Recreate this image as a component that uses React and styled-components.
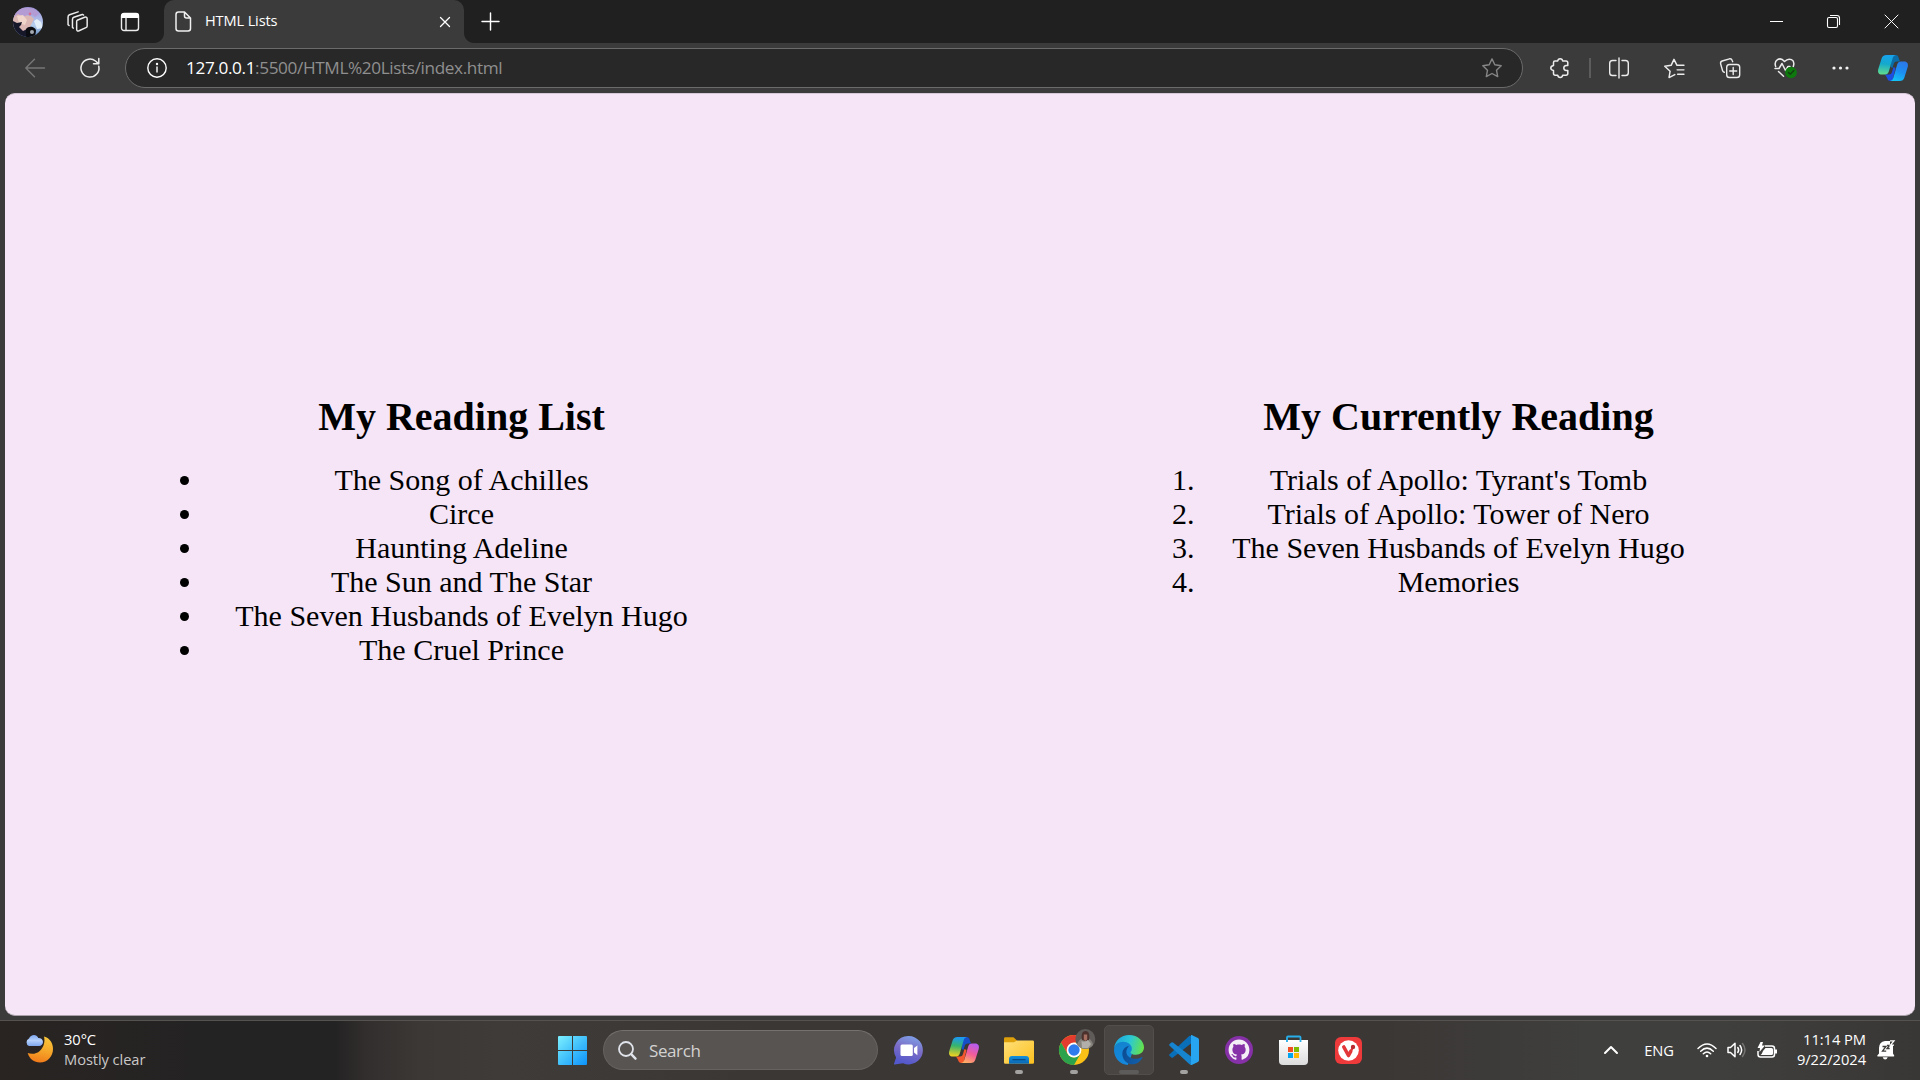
import React from "react";
import styled, { createGlobalStyle } from "styled-components";

const GlobalStyle = createGlobalStyle`
  * { box-sizing: border-box; }
  body { margin: 0; background: #3b3b3b; overflow: hidden; }
  svg { display: block; flex: none; overflow: visible; }
`;

const uiFont = `"Segoe UI", "Open Sans", "Noto Sans", sans-serif`;

const Screen = styled.div`
  width: 1920px;
  height: 1080px;
  display: flex;
  flex-direction: column;
  background: #3b3b3b;
  color: #fff;
  font-family: ${uiFont};
`;

const TitleBar = styled.header`
  height: 43px;
  flex: none;
  display: flex;
  background: #202020;
`;

const Cell = styled.div`
  width: ${(p) => p.$w}px;
  height: 100%;
  flex: none;
  display: flex;
  align-items: center;
  justify-content: ${(p) => p.$justify || "center"};
`;

const Tab = styled.div`
  position: relative;
  width: 300px;
  height: 43px;
  margin-left: 3px;
  padding: 0 14px 0 11px;
  display: flex;
  align-items: center;
  background: #3b3b3b;
  border-radius: 10px 10px 0 0;
  &::before,
  &::after {
    content: "";
    position: absolute;
    bottom: 0;
    width: 10px;
    height: 10px;
  }
  &::before {
    left: -10px;
    background: radial-gradient(circle at 0 0, #202020 9.5px, #3b3b3b 10.5px);
  }
  &::after {
    right: -10px;
    background: radial-gradient(circle at 100% 0, #202020 9.5px, #3b3b3b 10.5px);
  }
`;

const TabTitle = styled.span`
  flex: 1;
  margin: -3px 0 0 13px;
  font-size: 14.6px;
  line-height: 20px;
  letter-spacing: -0.14px;
`;

const Spacer = styled.div`
  flex: 1;
`;

const Toolbar = styled.nav`
  height: 50px;
  flex: none;
  display: flex;
  align-items: center;
`;

const AddressBar = styled.div`
  width: 1398px;
  height: 40px;
  margin: 0 9px 0 15px;
  padding: 0 20px 0 21px;
  display: flex;
  align-items: center;
  border: 1px solid #6b6b6b;
  border-radius: 20px;
  background: #282828;
`;

const Url = styled.span`
  flex: 1;
  margin: -1px 0 0 19px;
  font-size: 17.2px;
  line-height: 24px;
  letter-spacing: -0.38px;
  color: #8f8f8f;
  b {
    font-weight: 400;
    color: #fff;
  }
`;

const Divider = styled.div`
  width: 2px;
  height: 20px;
  margin-left: 1px;
  background: #5c5c5c;
`;

const Page = styled.main`
  height: 923px;
  flex: none;
  margin: 0 5px;
  padding: 300px 0 0 200px;
  display: flex;
  align-items: flex-start;
  gap: 484px;
  border-radius: 10px;
  border-top: 1px solid #d6c8d6;
  border-bottom: 1px solid #a9a0a9;
  background: #f5e5f7;
  color: #000;
  font-family: "Times New Roman", "Liberation Serif", serif;
`;

const Column = styled.section`
  width: 513px;
  text-align: center;
`;

const Heading = styled.h2`
  margin: 0 0 23px;
  font-size: 40px;
  line-height: 46px;
`;

const Books = styled.ul`
  margin: 0;
  padding: 0;
  font-size: 30px;
  line-height: 34px;
  list-style: ${(p) => (p.as === "ol" ? "decimal" : "disc")};
`;

const Taskbar = styled.footer`
  height: 60px;
  margin-top: 4px;
  padding-bottom: 1px;
  flex: none;
  display: flex;
  align-items: center;
  border-top: 1px solid #555250;
  background: linear-gradient(90deg, #292422 0, #242323 200px, #242323 335px, #312e2d 365px, #3c3836 420px, #3f3b38 500px, #3b3735 760px, #3b3735 1380px, #3f3f3e 1590px, #3f3f3e 1720px, #393736 1920px);
`;

const Weather = styled.div`
  width: 541px;
  padding-left: 25px;
  display: flex;
  align-items: center;
  gap: 11px;
`;

const Lines = styled.div`
  margin-top: -3px;
  font-size: 14.7px;
  line-height: 20px;
  letter-spacing: ${(p) => p.$spacing || 0}px;
  text-align: ${(p) => p.$align || "left"};
  white-space: nowrap;
`;

const Muted = styled.div`
  color: #c9c8c7;
`;

const Search = styled.div`
  width: 275px;
  height: 40px;
  padding-left: 14px;
  display: flex;
  align-items: center;
  gap: 12px;
  border: 1px solid #656260;
  border-top-color: #74716f;
  border-radius: 20px;
  background: #575452;
  color: #d3d2d1;
  font-size: 17px;
  letter-spacing: -0.4px;
`;

const Apps = styled.div`
  height: 100%;
  margin-left: 3px;
  display: flex;
`;

const AppSlot = styled.div`
  position: relative;
  width: 55px;
  height: 58px;
  display: flex;
  align-items: center;
  justify-content: center;
`;

const AppTile = styled.div`
  width: 50px;
  height: 50px;
  display: flex;
  align-items: center;
  justify-content: center;
  border-radius: 5px;
  border: 1px solid ${(p) => (p.$active ? "#514e4c" : "transparent")};
  background: ${(p) => (p.$active ? "#484543" : "transparent")};
`;

const Indicator = styled.i`
  position: absolute;
  bottom: 5px;
  left: 50%;
  width: ${(p) => (p.$active ? 20 : 8)}px;
  height: 4px;
  border-radius: 2px;
  transform: translateX(-50%);
  background: ${(p) => (p.$active ? "#5e5c5b" : "#a3a2a1")};
`;

const Language = styled.span`
  font-size: 14.7px;
  margin-top: -1px;
  letter-spacing: -0.2px;
`;

const Stroke = ({ s = 20, c = "#ececec", w = 1.4, children }) => (
  <svg width={s} height={s} viewBox="0 0 20 20" fill="none" stroke={c} strokeWidth={w} strokeLinecap="round" strokeLinejoin="round">
    {children}
  </svg>
);

const Avatar = () => (
  <svg width="30" height="30" viewBox="0 0 30 30">
    <defs>
      <clipPath id="avatarClip"><circle cx="15" cy="15" r="15" /></clipPath>
      <linearGradient id="sky" x1="0" y1="0" x2="0" y2="1">
        <stop offset="0" stopColor="#9c8fd6" />
        <stop offset=".6" stopColor="#b6cff0" />
        <stop offset="1" stopColor="#5f86bd" />
      </linearGradient>
    </defs>
    <g clipPath="url(#avatarClip)">
      <path fill="url(#sky)" d="M0 0h30v30H0z" />
      <path fill="#dcb8b4" d="M0 6 7 5l4 3 7 1 3 3-4 8-5 5-8-2-4-6z" />
      <path fill="#b39bd4" d="M2 5C8-1 22-1 26 7l-4 3-4-4-8 4-5-3-4 3z" />
      <path fill="#efd5ca" d="m4 9 6-1 4 5-2 5-6-2z" />
      <path fill="#17172a" d="m0 14 4 2 5-1-1 3-2 2 4 4 4-2 3 2 1 9H7L0 21z" />
      <path fill="#e3eefb" d="m21 14 3-2 4 3 2 6-6 1z" />
      <path fill="#0b0d12" d="M13 22c3-4 10-2 10 2l-1 6h-9z" />
      <circle cx="19" cy="25" r="2" fill="#a5a9b1" />
      <circle cx="17" cy="7" r="1.4" fill="#d66d93" />
    </g>
  </svg>
);

const Copilot = ({ id, colors }) => (
  <svg width="30" height="28" viewBox="0 0 30 28">
    <defs>
      <linearGradient id={id + "a"} x1=".4" y1="0" x2=".3" y2="1">
        <stop offset="0" stopColor={colors[0]} />
        <stop offset=".45" stopColor={colors[1]} />
        <stop offset="1" stopColor={colors[2]} />
      </linearGradient>
      <linearGradient id={id + "b"} x1=".7" y1="0" x2=".3" y2="1">
        <stop offset="0" stopColor={colors[3]} />
        <stop offset=".5" stopColor={colors[4]} />
        <stop offset="1" stopColor={colors[5]} />
      </linearGradient>
    </defs>
    <path fill={colors[6]} d="M14 1h3.500c2 0 2.700 1.200 3.300 3.200L22 7.500h-3c-2 0-3 1-3.500 3L14.500 14l-2-1z" />
    <path fill={colors[7]} d="M7 20.500h4c1.500 0 2.500-.8 3-2.500l1.500-5 2 1-3 13H12.500c-2 0-2.800-1-3.500-3.200z" />
    <path fill={`url(#${id}a)`} d="M8.500 1H18c-2.200.2-2.900 1.700-3.500 3.700l-3.700 12.800C10.200 19.500 9 20.500 7 20.500H4c-3.400 0-4.600-2.400-3.700-5.600L3.600 4.600C4.300 2.300 5.800 1 8.500 1z" />
    <path fill={`url(#${id}b)`} d="M21.500 27H12c2.200-.2 2.900-1.700 3.500-3.700l3.700-12.800C19.800 8.500 21 7.500 23 7.500h3c3.400 0 4.600 2.400 3.700 5.600l-3.300 10.300C25.700 25.700 24.200 27 21.500 27z" />
  </svg>
);

const MoonCloud = () => (
  <svg width="28" height="28" viewBox="0 0 28 28">
    <defs>
      <linearGradient id="moon" x1=".6" y1="0" x2=".4" y2="1">
        <stop offset="0" stopColor="#f8c53b" /><stop offset=".5" stopColor="#f5a82a" /><stop offset="1" stopColor="#f07a1a" />
      </linearGradient>
      <linearGradient id="cloud" x1="0" y1="0" x2="0" y2="1">
        <stop offset="0" stopColor="#7fa8f0" /><stop offset=".5" stopColor="#b4d0fb" /><stop offset="1" stopColor="#7fa7ee" />
      </linearGradient>
    </defs>
    <g transform="translate(0 -1.500)">
      <path fill="url(#moon)" d="M19 2C25 3.500 28 9 28 14.500 28 22 22.500 28 15 28 9 28 4.500 24.500 2.700 18.500c3.800 1.500 9 1 12.300-2.300C19 12.500 20.200 7 19 2z" />
      <path fill="url(#cloud)" d="M4 11.500a4 4 0 0 1 0-7.400C5.500 0 11.500-1 13.300 3.500c2.500-.2 4.700 1.500 4.700 4 0 2.300-1.700 4-4 4z" />
    </g>
  </svg>
);

const StartLogo = () => (
  <svg width="29" height="29" viewBox="0 0 29 29">
    <defs>
      <linearGradient id="win" gradientUnits="userSpaceOnUse" x1="0" y1="0" x2="29" y2="29">
        <stop offset="0" stopColor="#7df0ff" /><stop offset=".5" stopColor="#42c1fb" /><stop offset="1" stopColor="#0c93fb" />
      </linearGradient>
    </defs>
    <path fill="url(#win)" d="M1 0h13v14H0V1q0-1 1-1zm14 0h13q1 0 1 1v13H15zM0 15h14v14H1q-1 0-1-1zm15 0h14v13q0 1-1 1H15z" />
  </svg>
);

const ChatLogo = () => (
  <svg width="29" height="29" viewBox="0 0 29 29">
    <defs>
      <linearGradient id="chat" x1=".8" y1="0" x2=".5" y2="1">
        <stop offset="0" stopColor="#7fa4ea" /><stop offset=".5" stopColor="#7b6cc6" /><stop offset="1" stopColor="#5358cc" />
      </linearGradient>
    </defs>
    <path fill="url(#chat)" d="M14.800 0A14.200 14.200 0 1 1 9 27.200L.6 28.500c-.6 0-.7-.6-.5-1l2-6A14.200 14.200 0 0 1 14.800 0z" />
    <rect x="6.500" y="8.500" width="12.300" height="11.500" rx="1.500" fill="#fff" />
    <path fill="#fff" d="m20 12 3.400-2.600v9.800L20 16.600z" />
  </svg>
);

const FolderLogo = () => (
  <svg width="30" height="27" viewBox="0 0 30 27">
    <defs>
      <linearGradient id="folder" x1="0" y1="0" x2="1" y2="1"><stop offset="0" stopColor="#ffe07a" /><stop offset="1" stopColor="#fcc01e" /></linearGradient>
      <linearGradient id="folderBase" x1="0" y1="0" x2="0" y2="1"><stop offset="0" stopColor="#1391dd" /><stop offset="1" stopColor="#0a66b4" /></linearGradient>
    </defs>
    <path fill="#dd9f0a" d="M0 1.500Q0 .2 1.300.2H9.500L13 3.500V9H0z" />
    <path fill="url(#folder)" d="M0 5.300h10L13 3.500h15.700q1.300 0 1.300 1.300V25.500q0 1.300-1.300 1.300H1.300Q0 26.800 0 25.500z" />
    <path fill="url(#folderBase)" d="M5 26.800V22q0-3 3-3h14q3 0 3 3v4.800z" />
    <path stroke="#09477f" strokeWidth="1.200" d="M8.500 22.700h13" />
  </svg>
);

const ChromeLogo = () => (
  <svg width="30" height="30" viewBox="0 0 30 30">
    <circle cx="15" cy="15" r="15" fill="#fbc116" />
    <path fill="#e33b2e" d="M2 7.500A15 15 0 0 1 28 7.500H15L8.500 18.700z" />
    <path fill="#2ba24c" d="M2 7.500 8.500 18.700Q11 22.500 15 22.500q3.500 0 6.500-3.700L15 30A15 15 0 0 1 2 7.500z" />
    <circle cx="15" cy="15" r="7.400" fill="#fff" />
    <circle cx="15" cy="15" r="5.700" fill="#2e7bee" />
    <circle cx="26.300" cy="4" r="10" fill="#5e5b59" />
    <path fill="#88847d" d="M18 9.500q2-5 5-6l6-1q5 4 5 7.500-3 4-7.700 4-5 0-8.300-4.500z" />
    <path fill="#4b302c" d="M23 5c-1-5 0-9 3.500-9s4.500 4 3.500 9l-3 1z" />
    <path fill="#a66e60" d="M24.800-.5h3.400v5l-1.700 1.500-1.700-1.500z" />
    <path fill="#b2afab" d="M22.500 6q3 2 6.500-1l3 4-3 4h-6z" />
  </svg>
);

const EdgeLogo = () => (
  <svg width="30" height="30" viewBox="0 0 24 24">
    <defs>
      <linearGradient id="edgeTop" x1="0" y1=".4" x2="1" y2=".6"><stop offset="0" stopColor="#1ba5df" /><stop offset=".5" stopColor="#2cc8d3" /><stop offset="1" stopColor="#67e246" /></linearGradient>
      <linearGradient id="edgeLeft" x1=".3" y1="0" x2=".5" y2="1"><stop offset="0" stopColor="#1283ce" /><stop offset="1" stopColor="#1488dd" /></linearGradient>
      <linearGradient id="edgeDeep" x1="0" y1="0" x2="1" y2=".4"><stop offset="0" stopColor="#0b4a90" /><stop offset="1" stopColor="#125ea9" /></linearGradient>
    </defs>
    <path fill="url(#edgeLeft)" d="M0 12C0 7.500 4 4.800 8 4.800c5 0 7.800 3.200 7.800 6.500L11 23.900C5 23.800 0 18.500 0 12z" />
    <path fill="url(#edgeDeep)" d="M12 8.800c-3.500.5-5.500 3.400-5.300 6.800.3 5 4.600 8.400 9 7.800 3.300-.6 5.800-2.800 6.900-5.100.3-.5-.1-.8-.6-.5-5.800 3-12.400-.1-12.100-4.500.1-2 1-3.300 2.100-4.500z" />
    <path fill="url(#edgeTop)" d="M0 11C.5 4.500 5.800 0 12 0c7.300 0 12 5.200 12 9.800 0 3.700-3 6-6.400 6-2.700 0-4.400-1-4.400-1.900 0-.7 1.100-1 1.100-2.900 0-3-3.100-5.600-7-5.600C3.500 5.400.7 7.800 0 11z" />
  </svg>
);

const CodeLogo = () => (
  <svg width="30" height="30" viewBox="0 0 30 30">
    <path fill="#0a6fb9" d="m22 8.500-18 14q-.8.600-1.600 0L.6 21q-.9-.9 0-1.800L20.500.8 22 1z" />
    <path fill="#1684cf" d="m22 21.500-18-14q-.8-.6-1.600 0L.6 9q-.9.900 0 1.800l19.900 18.400L22 29z" />
    <path fill="#27a5f0" d="M22 8.400V.2q0-.5.700-.1l6.200 2.800Q30 3.500 30 4.700v20.600q0 1.200-1.100 1.800l-6.200 2.800q-1 .4-1.900-.4c1 .4 1.200-.5 1.200-1.200z" />
  </svg>
);

const GithubLogo = () => (
  <svg width="28" height="28" viewBox="0 0 28 28">
    <circle cx="14" cy="14" r="14" fill="#8631a7" />
    <g transform="translate(3.600 3.600) scale(1.300)">
      <path fill="#f4eef6" d="M8 0C3.580 0 0 3.580 0 8c0 3.540 2.290 6.530 5.470 7.590.4.070.55-.17.55-.38 0-.19-.01-.82-.01-1.490-2.010.37-2.530-.49-2.690-.94-.09-.23-.48-.94-.82-1.130-.28-.15-.68-.52-.01-.53.630-.01 1.080.58 1.230.82.720 1.210 1.870.87 2.330.66.070-.52.280-.87.510-1.070-1.780-.2-3.640-.89-3.640-3.950 0-.87.310-1.590.820-2.150-.08-.2-.36-1.020.08-2.120 0 0 .67-.21 2.200.82.640-.18 1.320-.27 2-.27s1.360.09 2 .27c1.530-1.040 2.200-.82 2.200-.82.440 1.100.16 1.920.08 2.120.51.560.82 1.270.82 2.150 0 3.070-1.870 3.750-3.650 3.950.29.25.54.73.54 1.480 0 1.070-.01 1.930-.01 2.200 0 .21.150.46.550.38A8.010 8.010 0 0 0 16 8c0-4.420-3.580-8-8-8z" />
    </g>
  </svg>
);

const StoreLogo = () => (
  <svg width="29" height="29" viewBox="0 0 29 29">
    <defs><linearGradient id="bag" x1="0" y1="0" x2="0" y2="1"><stop offset="0" stopColor="#fff" /><stop offset="1" stopColor="#dcdcdc" /></linearGradient></defs>
    <path fill="url(#bag)" d="M0 4h29v21q0 4-4 4H4q-4 0-4-4z" />
    <path fill="none" stroke="#28aee8" strokeWidth="1.800" d="M8 6V1.500Q8 .5 9 .5h11.500q1 0 1 1V6" />
    <path fill="#f25022" d="M9 11h5v5H9z" /><path fill="#7fba00" d="M15 11h5v5h-5z" />
    <path fill="#00a4ef" d="M9 17h5v5H9z" /><path fill="#ffb900" d="M15 17h5v5h-5z" />
  </svg>
);

const VivaldiLogo = () => (
  <svg width="27" height="27" viewBox="0 0 27 27">
    <rect width="27" height="27" rx="6" fill="#ef3a3c" />
    <circle cx="13.500" cy="13.500" r="10.300" fill="#fff" />
    <path fill="none" stroke="#e23638" strokeWidth="3.600" strokeLinecap="round" strokeLinejoin="round" d="m8.800 10 4.700 8.500 2.200-4" />
    <path stroke="#e23638" strokeWidth="2.400" d="m14.500 16.500 3.400-6" />
    <circle cx="18" cy="9.900" r="2.200" fill="#b82b30" />
  </svg>
);

const apps = [
  { name: "chat", icon: <ChatLogo /> },
  { name: "copilot", icon: <Copilot id="tb" colors={["#1b98f5", "#37b46c", "#f5d31e", "#b65cf0", "#f25c9a", "#ffae63", "#174fc9", "#f5572d"]} /> },
  { name: "files", icon: <FolderLogo />, open: true },
  { name: "chrome", icon: <ChromeLogo />, open: true },
  { name: "edge", icon: <EdgeLogo />, open: true, active: true },
  { name: "code", icon: <CodeLogo />, open: true },
  { name: "github", icon: <GithubLogo /> },
  { name: "store", icon: <StoreLogo /> },
  { name: "vivaldi", icon: <VivaldiLogo /> },
];

const readingList = [
  "The Song of Achilles",
  "Circe",
  "Haunting Adeline",
  "The Sun and The Star",
  "The Seven Husbands of Evelyn Hugo",
  "The Cruel Prince",
];

const currentlyReading = [
  "Trials of Apollo: Tyrant's Tomb",
  "Trials of Apollo: Tower of Nero",
  "The Seven Husbands of Evelyn Hugo",
  "Memories",
];

const star = "M10 .9l2.800 5.900 6.400.9-4.700 4.500 1.200 6.400L10 15.500l-5.700 3.100 1.200-6.400L.8 7.700l6.400-.9z";

export default function App() {
  return (
    <>
      <GlobalStyle />
      <Screen>
        <TitleBar>
          <Cell $w={56}><Avatar /></Cell>
          <Cell $w={43}>
            <Stroke s={21}>
              <path d="M9.700 8.800 16.800 6q2.400-.8 2.400 1.500v6.700q0 1.200-1.200 1.700l-6.500 2.900q-2.300.9-2.300-1.400v-7.200q0-1 .5-1.400zM5.200 15.700V8q0-1.500 1.300-2l8-2.700M5.200 15.700l.8.600M1 13V5.700q0-1.600 1.400-2.100L10.600.8M1 13l1 .8M15 3.300l.8.600" />
            </Stroke>
          </Cell>
          <Cell $w={62}>
            <Stroke s={20}>
              <rect x="1.500" y="1.500" width="17" height="17" rx="2.500" />
              <path fill="#fff" stroke="none" d="M1 6V4q0-3 3-3h12q3 0 3 3v2z" />
              <path d="M6 6v12" />
            </Stroke>
          </Cell>
          <Tab>
            <svg width="17" height="21" viewBox="0 0 17 21" fill="none" stroke="#f0f0f0" strokeWidth="1.500" strokeLinejoin="round">
              <path d="M3.500 1H9.500l6 6v10.500q0 2.500-2.500 2.500H3.500Q1 20 1 17.500v-14Q1 1 3.500 1zM9.500 1v4q0 2 2 2h4" />
            </svg>
            <TabTitle>HTML Lists</TabTitle>
            <Stroke s={10} c="#fff" w={2.600}><path d="M1 1l18 18M19 1 1 19" /></Stroke>
          </Tab>
          <Cell $w={53}><Stroke s={17} w={1.700} c="#fff"><path d="M10 0v20M0 10h20" /></Stroke></Cell>
          <Spacer />
          <Cell $w={58}><svg width="13" height="1"><path fill="#fff" d="M0 0h13v1H0z" /></svg></Cell>
          <Cell $w={57}>
            <svg width="13" height="13" viewBox="0 0 13 13" fill="none" stroke="#fff" strokeWidth="1.100">
              <rect x=".5" y="2.500" width="10" height="10" rx="1.500" /><path d="M3 .5h7q2.500 0 2.500 2.500v7" />
            </svg>
          </Cell>
          <Cell $w={58}><Stroke s={13} c="#fff" w={1.500}><path d="M0 0l20 20M20 0 0 20" /></Stroke></Cell>
        </TitleBar>

        <Toolbar>
          <Cell $w={70}><Stroke c="#777" w={1.400}><path d="M19.500 10H.8M9.500 1.300.8 10l8.700 8.700" /></Stroke></Cell>
          <Cell $w={40}><Stroke s={20} w={1.500}><path d="M18.800 8.300A9 9 0 1 1 15.500 3l2.700 2.400M18.800.5v5.300h-5.300" /></Stroke></Cell>
          <AddressBar>
            <Stroke s={20} c="#fff" w={1.400}><circle cx="10" cy="10" r="9.200" /><path d="M10 9v5" /><circle cx="10" cy="6" r=".5" fill="#fff" /></Stroke>
            <Url><b>127.0.0.1</b>:5500/HTML%20Lists/index.html</Url>
            <Stroke s={20} c="#868686" w={1.400}><path d={star} /></Stroke>
          </AddressBar>
          <Cell $w={56}>
            <Stroke w={1.500}>
              <path d="M3.500 4.500Q3.500 3 5 3h2.700Q8 .7 10.200.7T12.700 3H16q1.800 0 1.800 1.800V7.500h-1.500q-2.500.2-2.500 2.500t2.500 2.500h1.500v3q0 1.700-1.800 1.700h-3.300q-.3 2.300-2.500 2.300t-2.500-2.300H5.300q-1.800 0-1.800-1.700v-3Q.8 12 .8 10T3.500 7.500z" />
            </Stroke>
          </Cell>
          <Divider />
          <Cell $w={56}><Stroke><path d="M10 0v20M7 2.500H3.500Q.7 2.500.7 5.300v9.400q0 2.800 2.800 2.800H7M13 2.500h3.500q2.800 0 2.800 2.800v9.400q0 2.800-2.800 2.800H13" /></Stroke></Cell>
          <Cell $w={55}><Stroke s={21} w={1.400}><path d="M10.300 15.800 4.800 18.600l1-6L.7 7.900l6.100-.9L9.500 1.300l2.900 5.700H19M12.500 11.300H19M13 15.500h6" /></Stroke></Cell>
          <Cell $w={55}><Stroke s={20}><rect x="6.700" y="6.500" width="13" height="13" rx="2.800" /><path d="M13.200 9.500v7M9.700 13h7M4.300 14.300q-1.300-.3-1.700-1.600L.6 5.800Q.2 3.700 2.200 3L9.500.8q2-.4 2.700 1.600l.5 1.300" /></Stroke></Cell>
          <Cell $w={57}>
            <svg width="23" height="20" viewBox="0 0 23 20" fill="none" stroke="#ececec" strokeWidth="1.500" strokeLinecap="round" strokeLinejoin="round">
              <path d="M1.700 8.500Q0 4 3.500 1.700T10.500 3.500Q14 0 17.500 1.700T19.300 8.500M1 10.500h4L8 5.500l3.500 7L14 8.500h2M4.500 13.500 9.500 18.300" />
              <circle cx="17" cy="14.500" r="5.800" fill="#0e7a0e" stroke="none" />
              <path stroke="#123f12" d="m14.500 14.600 1.800 1.700 3.500-3.700" />
            </svg>
          </Cell>
          <Cell $w={52}><svg width="17" height="4" fill="#f2f2f2"><circle cx="2" cy="2" r="1.600" /><circle cx="8.500" cy="2" r="1.600" /><circle cx="15" cy="2" r="1.600" /></svg></Cell>
          <Cell $w={54}><Copilot id="nav" colors={["#18a2ec", "#14a9cc", "#62dc8c", "#2b78ea", "#1c8ff3", "#14c4f5", "#0a6da8", "#1d4fe0"]} /></Cell>
        </Toolbar>

        <Page>
          <Column>
            <Heading>My Reading List</Heading>
            <Books>{readingList.map((b) => <li key={b}>{b}</li>)}</Books>
          </Column>
          <Column>
            <Heading>My Currently Reading</Heading>
            <Books as="ol">{currentlyReading.map((b) => <li key={b}>{b}</li>)}</Books>
          </Column>
        </Page>

        <Taskbar>
          <Weather>
            <MoonCloud />
            <Lines $spacing={-0.08}>30°C<Muted>Mostly clear</Muted></Lines>
          </Weather>
          <Cell $w={62}><StartLogo /></Cell>
          <Search>
            <svg width="19" height="19" viewBox="0 0 19 19" fill="none" stroke="#e0e4ea" strokeLinecap="round">
              <circle cx="8" cy="8" r="7" strokeWidth="1.800" /><path d="m13.200 13.200 4.300 4.500" strokeWidth="2.400" />
            </svg>
            Search
          </Search>
          <Apps>
            {apps.map((a) => (
              <AppSlot key={a.name}>
                <AppTile $active={a.active}>{a.icon}</AppTile>
                {a.open && <Indicator $active={a.active} />}
              </AppSlot>
            ))}
          </Apps>
          <Spacer />
          <Cell $w={46}><svg width="14" height="8" viewBox="0 0 14 8" fill="none" stroke="#fff" strokeWidth="2" strokeLinecap="round" strokeLinejoin="round"><path d="m1 7 6-6 6 6" /></svg></Cell>
          <Cell $w={50}><Language>ENG</Language></Cell>
          <Cell $w={45}>
            <svg width="20" height="15" viewBox="0 0 20 15" fill="none" stroke="#fff" strokeWidth="1.500" strokeLinecap="round">
              <path d="M1 5.500q9-9 18 0M3.700 8.200q6.300-6.200 12.600 0M6.300 10.800q3.700-3.600 7.400 0" /><circle cx="10" cy="13" r="1.300" fill="#fff" stroke="none" />
            </svg>
          </Cell>
          <Cell $w={16}>
            <svg width="20" height="16" viewBox="0 0 20 16" fill="none" stroke="#fff" strokeWidth="1.500" strokeLinecap="round" strokeLinejoin="round">
              <path d="M1 5.500h2.500L8 1.200v13.600l-4.500-4.300H1zM10.800 5.500q1.700 2.500 0 5M13 3.500q3.300 4.500 0 9" /><path stroke="#747372" d="M15.500 1.500q5 6.500 0 13" />
            </svg>
          </Cell>
          <Cell $w={43}>
            <svg width="20" height="17" viewBox="0 0 20 17" fill="none" stroke="#fff" strokeWidth="1.500" strokeLinejoin="round">
              <path d="M8 4h7q2.500 0 2.500 2.500v6q0 2.500-2.500 2.500H3.500Q1 15 1 12.500V9" /><path fill="#fff" stroke="none" d="M8.500 6h6q1.500 0 1.500 1.500v4q0 1.500-1.500 1.500H3.500Q5 12 6 9zM18 7.500h2v4h-2zM3.500 0H6L5 3.500h3L2.500 10 3 6H.5z" />
            </svg>
          </Cell>
          <Cell $w={78} $justify="flex-end">
            <Lines $align="right" $spacing={-0.05}>11:14 PM<br />9/22/2024</Lines>
          </Cell>
          <Cell $w={54} $justify="flex-start">
            <svg width="39" height="20" viewBox="-11 0 39 20">
              <path fill="#fff" d="M2 13.500V8q0-6 6-7h5v4h3v8.500l1.200 2q.3 1-.7 1H1q-1 0-.7-1zM5.700 17.300h5q-.7 2.300-2.500 2.300t-2.500-2.300z" />
              <path stroke="#3e3c3b" fill="none" strokeWidth="1.300" d="M5.500 6.500H9l-3.500 4.700h3.700M10 5.500h2.500L10 8.500h2.700" />
              <path stroke="#fff" fill="none" strokeWidth="1.300" d="M13 .8h4l-3.500 4.400H17" />
            </svg>
          </Cell>
        </Taskbar>
      </Screen>
    </>
  );
}
